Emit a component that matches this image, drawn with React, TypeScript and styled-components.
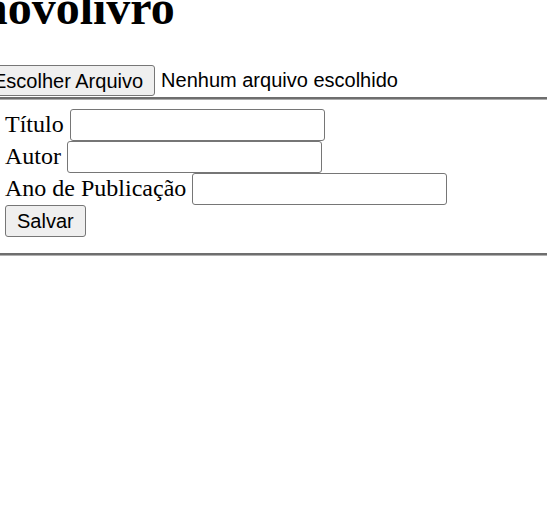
import React from 'react';
import styled, { createGlobalStyle } from 'styled-components';

const GlobalStyle = createGlobalStyle`
  html, body {
    margin: 0;
    padding: 0;
    background: #ffffff;
    overflow: hidden;
  }
`;

// the page in the shot is scrolled a little to the right and down
const Page = styled.div`
  margin: 0 -30px 0 -19px;
  color: #000;
  font-family: 'Liberation Serif', 'Times New Roman', serif;
`;

const Title = styled.h1`
  margin: -20px 0 30px;
  font-size: 48px;
  line-height: 55px;
  font-weight: bold;
`;

const FileRow = styled.div`
  display: flex;
  align-items: flex-start;
  height: 32px;
  font-family: 'Liberation Sans', Arial, sans-serif;
  font-size: 20px;
`;

const NativeButton = styled.button<{ $h?: number; $px?: number }>`
  box-sizing: border-box;
  height: ${(p) => p.$h ?? 32}px;
  padding: 0 ${(p) => p.$px ?? 11}px;
  background: #efefef;
  border: 1px solid #767676;
  border-radius: 3px;
  color: #000;
  font-family: 'Liberation Sans', Arial, sans-serif;
  font-size: 20px;
  line-height: 1;
  cursor: default;
`;

const FileName = styled.span`
  margin-left: 6px;
  line-height: 31px;
`;

const Fieldset = styled.form`
  margin: 0 3px;
  padding: 10px 18px 18px 21px;
  border-top: 2px solid #6e6e6e;
  border-bottom: 1px solid #b0b0b0;
  box-shadow: inset 0 1px 0 #ababab, inset 0 -2px 0 #6e6e6e;
  display: flex;
  flex-direction: column;
`;

const Row = styled.div`
  display: flex;
  align-items: baseline;
  gap: 6px;
  height: 32px;
  font-size: 24px;
`;

const TextInput = styled.input`
  box-sizing: border-box;
  width: 255px;
  height: 32px;
  padding: 0 3px;
  border: 1px solid #767676;
  border-radius: 3px;
  background: #fff;
  font-family: 'Liberation Sans', Arial, sans-serif;
  font-size: 20px;
`;

const fields = ['Título', 'Autor', 'Ano de Publicação'];

const App: React.FC = () => {
  return (
    <Page>
      <GlobalStyle />
      <Title>novolivro</Title>
      <FileRow>
        <NativeButton type="button" $h={31} $px={11}>Escolher Arquivo</NativeButton>
        <FileName>Nenhum arquivo escolhido</FileName>
      </FileRow>
      <Fieldset onSubmit={(e) => e.preventDefault()}>
        {fields.map((label) => (
          <Row key={label}>
            <label>{label}</label>
            <TextInput type="text" />
          </Row>
        ))}
        <Row>
          <NativeButton type="submit" $px={11}>Salvar</NativeButton>
        </Row>
      </Fieldset>
    </Page>
  );
};

export default App;
